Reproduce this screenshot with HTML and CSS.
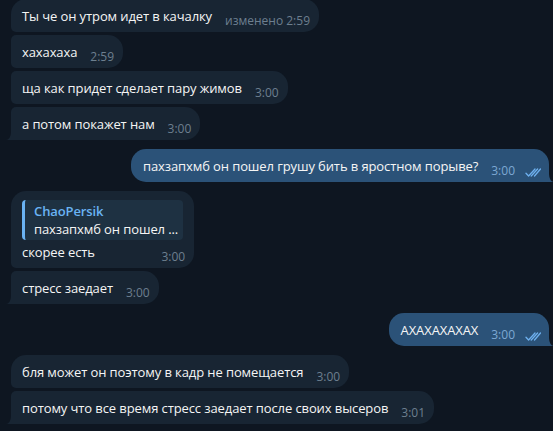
FILE: index.html
```html
<!DOCTYPE html>
<html lang="ru">
<head>
    <meta charset="UTF-8">
    <title>Чат</title>
    <link rel="stylesheet" href="styles.css">
</head>
<body>
    <div class="chat">
        <div class="msg in">
            <span class="text">Ты че он утром идет в качалку</span>
            <span class="time">изменено 2:59</span>
        </div>
        <div class="msg in mid">
            <span class="text">хахахаха</span>
            <span class="time">2:59</span>
        </div>
        <div class="msg in mid">
            <span class="text">ща как придет сделает пару жимов</span>
            <span class="time">3:00</span>
        </div>
        <div class="msg in mid tail">
            <span class="text">а потом покажет нам</span>
            <span class="time">3:00</span>
        </div>

        <div class="msg out group tail">
            <span class="text">пахзапхмб он пошел грушу бить в яростном порыве?</span>
            <span class="time">3:00</span>
            <svg class="ticks" viewBox="0 0 16 9" width="16" height="9"><path d="M1 5.2 L3.6 8 L10 1 M6.2 8 L12.6 1 M9.5 8 L15.5 1"/></svg>
        </div>

        <div class="msg in group reply">
            <div class="quote">
                <div class="quote-name">ChaoPersik</div>
                <div class="quote-text">пахзапхмб он пошел ...</div>
            </div>
            <div class="line">
                <span class="text">скорее есть</span>
                <span class="time">3:00</span>
            </div>
        </div>
        <div class="msg in mid tail">
            <span class="text">стресс заедает</span>
            <span class="time">3:00</span>
        </div>

        <div class="msg out group tail">
            <span class="text">АХАХАХАХАХ</span>
            <span class="time">3:00</span>
            <svg class="ticks" viewBox="0 0 16 9" width="16" height="9"><path d="M1 5.2 L3.6 8 L10 1 M6.2 8 L12.6 1 M9.5 8 L15.5 1"/></svg>
        </div>

        <div class="msg in group">
            <span class="text">бля может он поэтому в кадр не помещается</span>
            <span class="time">3:00</span>
        </div>
        <div class="msg in mid tail">
            <span class="text">потому что все время стресс заедает после своих высеров</span>
            <span class="time">3:01</span>
        </div>
    </div>
</body>
</html>
```

FILE: styles.css
```css
body {
    margin: 0;
    background-color: #0e1621;
    font-family: 'Open Sans', 'Noto Sans', sans-serif;
    color: #f5f5f5;
    overflow: hidden;
}
.chat {
    display: flex;
    flex-direction: column;
    align-items: flex-start;
    padding: 0 4px 0 11px;
    margin-top: -1px;
}
.msg {
    position: relative;
    display: flex;
    align-items: flex-end;
    padding: 8px 9px 4px 11px;
    background-color: #182533;
    border-radius: 15px 15px 15px 5px;
    margin-top: 3px;
}
.msg:first-child {
    margin-top: 0;
}
.msg.group {
    margin-top: 9px;
}
.msg.in.mid {
    border-top-left-radius: 5px;
}
.msg.in.tail {
    border-bottom-left-radius: 0;
}
.msg.out {
    align-self: flex-end;
    background-color: #2b5278;
    padding: 8px 8px 4px 12px;
    border-radius: 15px 15px 0 15px;
}
.text {
    font-size: 13px;
    line-height: 18px;
    letter-spacing: -0.1px;
    padding-bottom: 3px;
    white-space: nowrap;
}
.time {
    font-size: 12px;
    line-height: 14px;
    margin-left: 13px;
    color: #6d7f8f;
    white-space: nowrap;
}
.msg.out .time {
    color: #7da8d3;
}
.ticks {
    margin-left: 10px;
    margin-bottom: 1px;
    fill: none;
    stroke: #6eb0ee;
    stroke-width: 1.3;
    stroke-linecap: round;
    stroke-linejoin: round;
}

/* tails */
.msg.tail::before,
.msg.tail::after {
    content: '';
    position: absolute;
    bottom: 0;
    width: 5px;
    height: 8px;
}
.msg.in.tail::before {
    left: -5px;
    background-color: #182533;
}
.msg.in.tail::after {
    left: -5px;
    background-color: #0e1621;
    border-bottom-right-radius: 5px 8px;
}
.msg.out.tail::before {
    right: -5px;
    background-color: #2b5278;
}
.msg.out.tail::after {
    right: -5px;
    background-color: #0e1621;
    border-bottom-left-radius: 5px 8px;
}

/* reply */
.msg.reply {
    flex-direction: column;
    align-items: stretch;
    padding-top: 9px;
}
.quote {
    margin: 0 2px 3px 0;
    padding: 2px 5px 2px 9px;
    background-color: #1e3142;
    border-left: 3px solid #6ab2f2;
    border-radius: 4px;
    font-size: 13px;
    line-height: 18px;
    letter-spacing: -0.1px;
}
.quote-name {
    color: #6ab3f3;
    font-weight: 600;
}
.quote-text {
    white-space: nowrap;
}
.line {
    display: flex;
    align-items: flex-end;
    justify-content: space-between;
}
```
